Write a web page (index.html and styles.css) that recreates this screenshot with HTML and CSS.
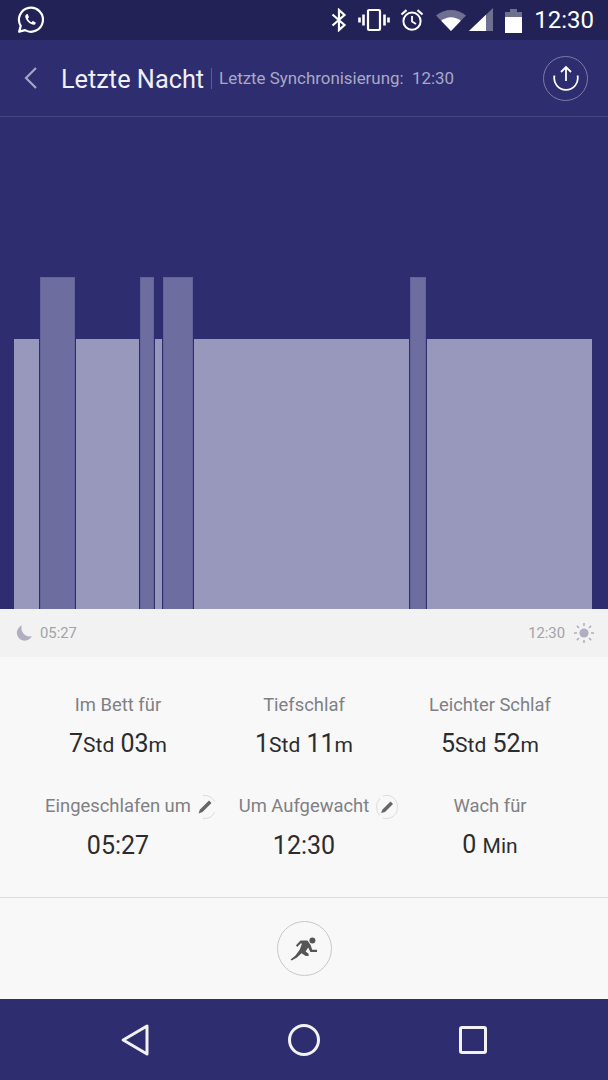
FILE: index.html
```html
<!DOCTYPE html>
<html lang="de">
<head>
  <meta charset="UTF-8" />
  <meta name="viewport" content="width=device-width, initial-scale=1.0"/>
  <title>Letzte Nacht</title>
  <link rel="stylesheet" href="styles.css">
</head>
<body>
  <div class="status-bar">
    <svg class="wa-icon" width="28" height="28" viewBox="0 0 28 28" fill="none">
      <path d="M3.2 25.6 L4.7 19.9 A12 12 0 1 1 9 24.1 Z" stroke="#fff" stroke-width="2.2" stroke-linejoin="round"/>
      <path d="M10.6 8.2 C9.4 8.7 9 10 9.4 11.6 C10.1 14.4 13.4 17.9 16.4 18.6 C18 19 19.4 18.5 19.7 17.2 C19.8 16.7 19.7 16.4 19.3 16.2 L17.3 15.2 C16.9 15 16.6 15.1 16.3 15.4 L15.6 16.3 C14 15.7 12.4 14 11.8 12.5 L12.6 11.7 C12.9 11.4 12.9 11.1 12.8 10.8 L11.9 8.6 C11.7 8.1 11.2 8 10.6 8.2 Z" fill="#fff"/>
    </svg>
    <div class="status-right">
      <svg width="16" height="24" viewBox="0 0 16 24" fill="none" stroke="#fff" stroke-width="2.2">
        <path d="M1.5 6.5 L13.5 17 L8 22 V2 L13.5 7 L1.5 17.5"/>
      </svg>
      <svg class="vib" width="32" height="24" viewBox="0 0 32 24" fill="none" stroke="#fff">
        <rect x="10" y="2" width="12" height="20" rx="1.2" stroke-width="2.2"/>
        <path d="M5.5 6.5 V17.5 M26.5 6.5 V17.5" stroke-width="2.6"/>
        <path d="M1.5 9.5 V14.5 M30.5 9.5 V14.5" stroke-width="2.6"/>
      </svg>
      <svg class="alarm" width="24" height="24" viewBox="0 0 24 24" fill="none" stroke="#fff">
        <circle cx="12" cy="13.2" r="8.6" stroke-width="2"/>
        <path d="M12 8 V13.6 L16 16" stroke-width="1.8"/>
        <path d="M1.5 6.5 L6.5 2.2 M22.5 6.5 L17.5 2.2" stroke-width="2.2"/>
      </svg>
      <svg class="wifi" width="30" height="24" viewBox="0 0 30 24">
        <path d="M0 7.5 C8.5 0 21.5 0 30 7.5 L15 23 Z" fill="#fff" fill-opacity="0.35"/>
        <path d="M5.2 12.8 C11 8 19 8 24.8 12.8 L15 23 Z" fill="#fff"/>
      </svg>
      <svg class="signal" width="24" height="24" viewBox="0 0 24 24">
        <path d="M0 23 L24 0 V23 Z" fill="#fff" fill-opacity="0.35"/>
        <path d="M0 23 L17 6.8 V23 Z" fill="#fff"/>
      </svg>
      <svg class="battery" width="17" height="25" viewBox="0 0 17 25">
        <path d="M0 4 H5 V1 H12 V4 H17 V25 H0 Z" fill="#fff" fill-opacity="0.35"/>
        <rect y="9" width="17" height="16" fill="#fff"/>
      </svg>
      <span class="clock">12:30</span>
    </div>
  </div>

  <header class="top-bar">
    <svg class="back" width="16" height="24" viewBox="0 0 16 24" fill="none">
      <path d="M13 2 L3 12 L13 22" stroke="#a5a5c4" stroke-width="2.2"/>
    </svg>
    <h1>Letzte Nacht</h1>
    <span class="sync">Letzte Synchronisierung:&nbsp; 12:30</span>
    <button class="upload" title="Teilen">
      <svg width="26" height="26" viewBox="0 0 26 26" fill="none" stroke="#fff" stroke-width="1.8">
        <path d="M1.5 10.5 A11.8 11.8 0 1 0 24.5 10.5"/>
        <path d="M13 16 V2 M8 7 L13 2 L18 7"/>
      </svg>
    </button>
  </header>

  <div class="chart" id="chart"></div>

  <div class="time-row">
    <span class="time-item">
      <svg width="16" height="16" viewBox="0 0 16 16"><path d="M6 0.5 A7.8 7.8 0 1 0 15.8 11 A8 8 0 0 1 6 0.5 Z" fill="#b0afc1"/></svg>
      05:27
    </span>
    <span class="time-item">
      12:30
      <svg width="22" height="22" viewBox="0 0 22 22" fill="none">
        <circle cx="11" cy="11" r="4.6" fill="#b0afc1"/>
        <path d="M11 1 V4 M11 18 V21 M1 11 H4 M18 11 H21 M3.9 3.9 L6 6 M16 16 L18.1 18.1 M3.9 18.1 L6 16 M16 6 L18.1 3.9" stroke="#b0afc1" stroke-width="1.6"/>
      </svg>
    </span>
  </div>

  <section class="stats">
    <div class="stat">
      <div class="stat-label">Im Bett für</div>
      <div class="stat-value has-unit">7<small>Std</small> 03<small>m</small></div>
    </div>
    <div class="stat">
      <div class="stat-label">Tiefschlaf</div>
      <div class="stat-value has-unit">1<small>Std</small> 11<small>m</small></div>
    </div>
    <div class="stat">
      <div class="stat-label">Leichter Schlaf</div>
      <div class="stat-value has-unit">5<small>Std</small> 52<small>m</small></div>
    </div>
    <div class="stat">
      <div class="stat-label">
        <span class="editable">Eingeschlafen um
          <svg class="edit edit-clipped" width="18" height="26" viewBox="0 0 18 26" fill="none">
            <path d="M6 1.5 A12 12 0 0 1 17.8 8 M17.8 18 A12 12 0 0 1 6 24.5" stroke="#dcdcdc" stroke-width="1"/>
            <path d="M1.5 19.5 L3 15.5 L12 6.5 L14.5 9 L5.5 18 Z" fill="#666"/>
          </svg>
        </span>
      </div>
      <div class="stat-value">05:27</div>
    </div>
    <div class="stat">
      <div class="stat-label">
        <span class="editable">Um Aufgewacht
          <svg class="edit" width="22" height="26" viewBox="0 0 22 26" fill="none">
            <path d="M7 2 A11 11 0 0 1 21.5 13 A11 11 0 0 1 7 24 M4 21.5 A11 11 0 0 1 0.5 13 A11 11 0 0 1 4 4.5" stroke="#dcdcdc" stroke-width="1"/>
            <path d="M5 19 L6.5 15.5 L14.5 7.5 L17 10 L9 18 Z" fill="#666"/>
          </svg>
        </span>
      </div>
      <div class="stat-value">12:30</div>
    </div>
    <div class="stat">
      <div class="stat-label">Wach für</div>
      <div class="stat-value has-unit">0 <small>Min</small></div>
    </div>
  </section>

  <div class="action-row">
    <button class="run-btn" title="Aktivität">
      <svg width="28" height="24" viewBox="0 0 28 24">
        <circle cx="22.4" cy="3.4" r="3" fill="#555"/>
        <path d="M10.5 3.5 H17.5 L20.6 8 L22.2 12.8 H27 V15 H20.4 L18.2 10.5 L15.6 14.5 L18.6 16.8 V19 H15.8 L11.5 16.2 L7 20.5 L1.6 23.6 L0.6 22.4 L5.5 18.5 L9.8 12.5 L12 6.5 H10.6 L7.2 10 L6 8.2 Z" fill="#555"/>
      </svg>
    </button>
  </div>

  <nav class="nav-bar">
    <svg width="28" height="32" viewBox="0 0 28 32" fill="none">
      <path d="M2.2 16 L26 2 V30 Z" stroke="#f2f2f2" stroke-width="3" stroke-linejoin="round"/>
    </svg>
    <svg width="32" height="32" viewBox="0 0 32 32" fill="none">
      <circle cx="16" cy="16" r="14.5" stroke="#f2f2f2" stroke-width="3"/>
    </svg>
    <svg width="28" height="28" viewBox="0 0 28 28" fill="none">
      <rect x="1.5" y="1.5" width="25" height="25" rx="1.5" stroke="#f2f2f2" stroke-width="3"/>
    </svg>
  </nav>

  <script>
    // sleep phases, widths in px (deep ones include their 1px gaps)
    const phases = [
      ['light', 25], ['deep', 37], ['light', 63], ['deep', 16], ['light', 7],
      ['deep', 32], ['light', 215], ['deep', 18], ['light', 165]
    ];
    const chart = document.getElementById('chart');
    phases.forEach(([kind, w]) => {
      const seg = document.createElement('div');
      seg.className = 'seg ' + kind;
      seg.style.width = w + 'px';
      chart.appendChild(seg);
    });
  </script>
</body>
</html>
```

FILE: styles.css
```css
* {
  box-sizing: border-box;
}

body {
  margin: 0;
  width: 608px;
  height: 1080px;
  overflow: hidden;
  font-family: 'Roboto', sans-serif;
  background-color: #f8f8f8;
  color: #333;
  display: flex;
  flex-direction: column;
}

button {
  padding: 0;
  background: none;
  display: flex;
  align-items: center;
  justify-content: center;
}

.status-bar {
  height: 40px;
  flex: none;
  background-color: #232257;
  color: #fff;
  display: flex;
  justify-content: space-between;
  align-items: center;
  padding: 0 14px 0 16px;
}

.status-right {
  display: flex;
  align-items: center;
  gap: 12px;
}

.status-right .vib {
  margin-left: -1px;
}

.status-right .alarm {
  margin-left: -2px;
}

.status-right .signal {
  margin-left: -9px;
}

.clock {
  font-size: 24px;
}

.top-bar {
  height: 77px;
  flex: none;
  background-color: #2e2d70;
  border-bottom: 1px solid #45457f;
  display: flex;
  align-items: center;
  padding: 0 20px 0 23px;
}

.top-bar h1 {
  margin: 2px 0 0 22px;
  font-size: 25.3px;
  font-weight: 400;
  color: #f0f0f5;
}

.sync {
  margin-left: 7px;
  padding-left: 7px;
  border-left: 1px solid #5d5c91;
  font-size: 16.9px;
  line-height: 21px;
  color: #a9a9c6;
}

.upload {
  margin-left: auto;
  width: 45px;
  height: 45px;
  border: 1px solid #7b7ba5;
  border-radius: 50%;
}

.chart {
  height: 492px;
  flex: none;
  background-color: #2e2d70;
  display: flex;
  align-items: flex-end;
  padding-left: 14px;
}

.seg.light {
  height: 270px;
  background-color: #9897bc;
}

.seg.deep {
  height: 332px;
  background-color: #6d6e9f;
  background-clip: padding-box;
  border-left: 1px solid transparent;
  border-right: 1px solid transparent;
  box-shadow: inset 1px 1px 0 #62639a, inset -1px 0 0 #62639a;
}

.time-row {
  height: 48px;
  flex: none;
  background-color: #f2f2f2;
  display: flex;
  justify-content: space-between;
  align-items: center;
  padding: 0 13px 0 16px;
  font-size: 14.8px;
  color: #a2a2a8;
}

.time-item {
  display: flex;
  align-items: center;
  gap: 8px;
}

.stats {
  height: 241px;
  flex: none;
  border-bottom: 1px solid #dcdcdc;
  display: grid;
  grid-template-columns: repeat(3, 186px);
  justify-content: center;
  grid-auto-rows: 101px;
  padding-top: 36px;
}

.stat {
  text-align: center;
}

.stat-label {
  font-size: 18.4px;
  line-height: 24px;
  color: #808084;
  white-space: nowrap;
}

.editable {
  position: relative;
}

.edit {
  position: absolute;
  left: calc(100% + 7px);
  top: -1px;
}

.edit-clipped {
  left: calc(100% + 6px);
}

.stat-value {
  margin-top: 12px;
  font-size: 25px;
  line-height: 32px;
  color: #2c2c2e;
}

.stat-value.has-unit {
  margin-top: 11px;
}

.stat-value small {
  font-size: 21px;
  line-height: 0;
}

.action-row {
  flex: 1;
  display: flex;
  align-items: center;
  justify-content: center;
}

.run-btn {
  width: 55px;
  height: 55px;
  border: 1px solid #c8c8c8;
  border-radius: 50%;
}

.nav-bar {
  height: 81px;
  flex: none;
  background-color: #2e2d70;
  display: flex;
  align-items: center;
  justify-content: space-between;
  padding: 0 121px;
}
```
